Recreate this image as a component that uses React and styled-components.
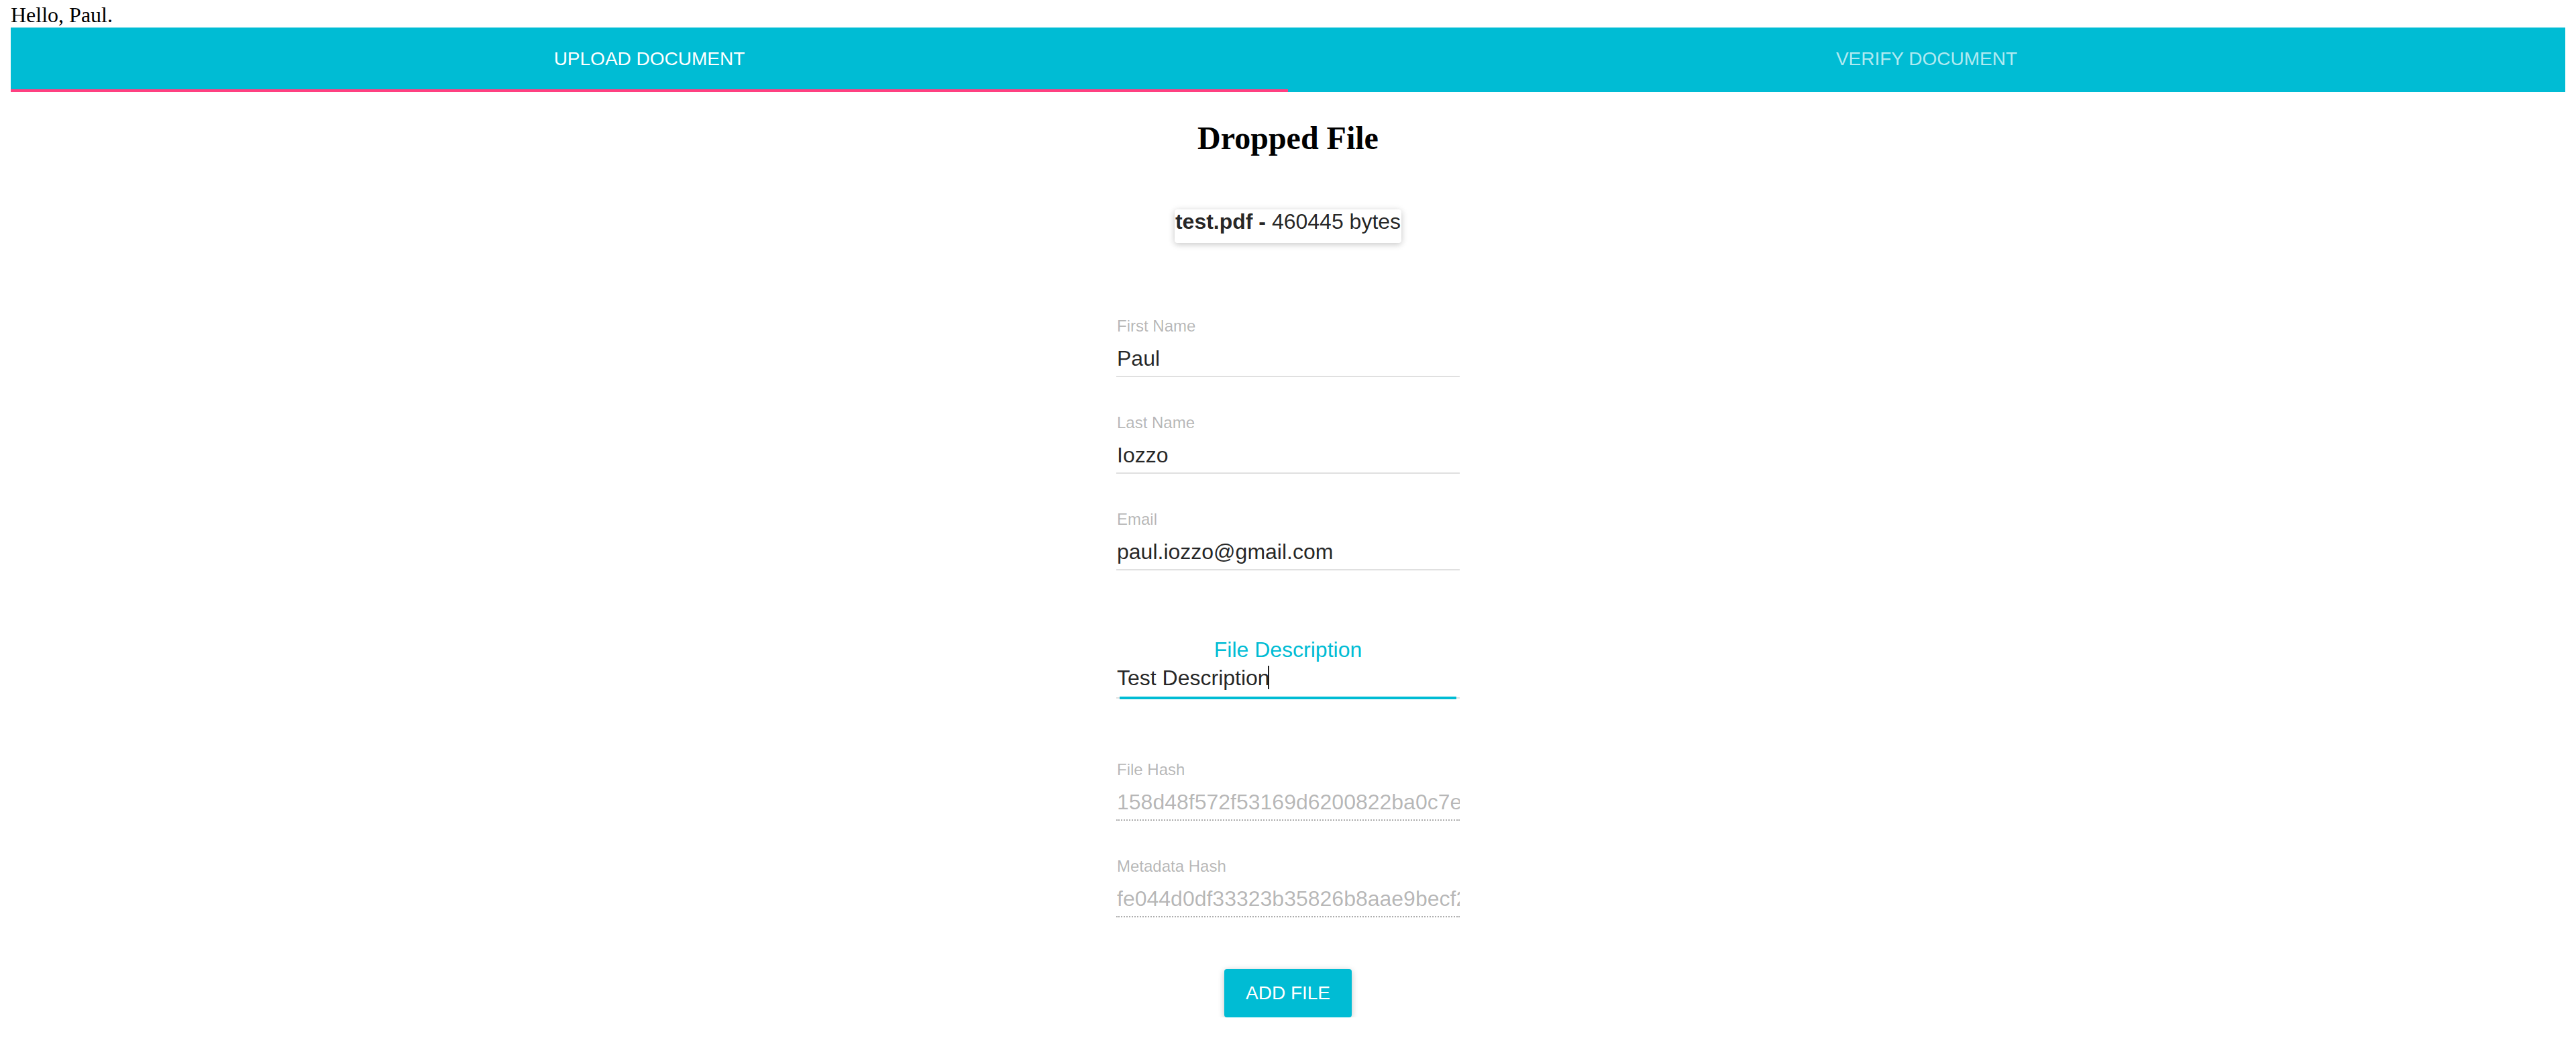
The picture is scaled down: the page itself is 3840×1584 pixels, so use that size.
import React from "react";
import styled, { createGlobalStyle } from "styled-components";

const CYAN = "#00bcd4";
const PINK = "#ff4081";

const GlobalStyle = createGlobalStyle`
  html, body { background: #ffffff; }
  body {
    margin: 4px 16px 16px;
    font-family: "Liberation Serif", "Times New Roman", serif;
    color: #000;
  }
`;

const Greeting = styled.div`
  font-family: "Liberation Serif", "Times New Roman", serif;
  font-size: 32px;
  line-height: 37px;
  height: 37px;
`;

const TabBar = styled.nav`
  display: grid;
  grid-template-columns: 1fr 1fr;
  height: 96px;
  background: ${CYAN};
`;

const Tab = styled.div`
  display: flex;
  align-items: center;
  justify-content: center;
  height: 90px;
  padding-top: 2px;
  border-bottom: 4px solid ${(p) => (p.$active ? PINK : "transparent")};
  font-family: "Liberation Sans", Arial, sans-serif;
  font-size: 28px;
  text-transform: uppercase;
  color: ${(p) => (p.$active ? "#ffffff" : "rgba(255,255,255,0.7)")};
`;

const Main = styled.main`
  display: flex;
  flex-direction: column;
  align-items: center;
`;

const Title = styled.h2`
  margin: 41px 0 0;
  font-family: "Liberation Serif", "Times New Roman", serif;
  font-size: 48px;
  font-weight: bold;
  line-height: 55px;
`;

const FileChip = styled.div`
  margin-top: 79px;
  padding: 0 1px 13px;
  font-family: "Liberation Sans", Arial, sans-serif;
  font-size: 32px;
  line-height: 37px;
  color: rgba(0, 0, 0, 0.87);
  background: #fff;
  border-radius: 4px;
  box-shadow: 0 2px 12px rgba(0, 0, 0, 0.12), 0 2px 8px rgba(0, 0, 0, 0.12);
  white-space: nowrap;
`;

const Form = styled.form`
  margin-top: 72px;
  width: 512px;
  display: flex;
  flex-direction: column;
  font-family: "Liberation Sans", Arial, sans-serif;
`;

const Field = styled.div`
  height: 144px;
  display: flex;
  flex-direction: column;
`;

const Label = styled.label`
  margin-top: 34px;
  padding-left: 1px;
  font-size: 24px;
  line-height: 36px;
  color: rgba(0, 0, 0, 0.3);
`;

const Value = styled.div`
  margin-top: 6px;
  padding-left: 1px;
  font-size: 32px;
  line-height: 48px;
  height: 48px;
  white-space: nowrap;
  overflow: hidden;
  color: ${(p) => (p.$disabled ? "rgba(0,0,0,0.3)" : "rgba(0,0,0,0.87)")};
`;

const Underline = styled.div`
  margin-top: 2px;
  height: 0;
  border-bottom: 2px ${(p) => (p.$disabled ? "dotted rgba(0,0,0,0.32)" : "solid #e0e0e0")};
`;

const DescField = styled.div`
  display: flex;
  flex-direction: column;
  padding-top: 82px;
  padding-bottom: 54px;
`;

const DescLabel = styled.label`
  font-size: 32px;
  line-height: 40px;
  text-align: center;
  color: ${CYAN};
`;

const DescValue = styled.div`
  margin-top: 2px;
  padding-left: 1px;
  font-size: 32px;
  line-height: 40px;
  height: 40px;
  white-space: nowrap;
  color: rgba(0, 0, 0, 0.87);
`;

const Caret = styled.span`
  display: inline-block;
  vertical-align: top;
  width: 2px;
  height: 35px;
  margin-top: 2px;
  margin-left: -3px;
  background: rgba(0, 0, 0, 0.87);
`;

const FocusUnderline = styled.div`
  position: relative;
  margin-top: 9px;
  height: 2px;
  background: #e0e0e0;
`;

const FocusLine = styled.div`
  position: absolute;
  top: -1px;
  left: 5px;
  right: 5px;
  height: 4px;
  background: ${CYAN};
`;

const AddButton = styled.button`
  margin-top: 61px;
  height: 72px;
  padding: 0 32px;
  border: none;
  border-radius: 4px;
  background: ${CYAN};
  color: #fff;
  font-family: "Liberation Sans", Arial, sans-serif;
  font-size: 28px;
  text-transform: uppercase;
  box-shadow: 0 2px 12px rgba(0, 0, 0, 0.12), 0 2px 8px rgba(0, 0, 0, 0.12);
  cursor: pointer;
`;

const fields = [
  { label: "First Name", value: "Paul" },
  { label: "Last Name", value: "Iozzo" },
  { label: "Email", value: "paul.iozzo@gmail.com" },
];

const hashes = [
  { label: "File Hash", value: "158d48f572f53169d6200822ba0c7e4f1a9b3c2d5e6f7081" },
  { label: "Metadata Hash", value: "fe044d0df33323b35826b8aae9becf2a71c0d4e59b8f6a13" },
];

export default function App() {
  return (
    <>
      <GlobalStyle />
      <Greeting>Hello, Paul.</Greeting>
      <TabBar>
        <Tab $active>Upload Document</Tab>
        <Tab>Verify Document</Tab>
      </TabBar>
      <Main>
        <Title>Dropped File</Title>
        <FileChip>
          <b>test.pdf - </b>460445 bytes
        </FileChip>
        <Form onSubmit={(e) => e.preventDefault()}>
          {fields.map((f) => (
            <Field key={f.label}>
              <Label>{f.label}</Label>
              <Value>{f.value}</Value>
              <Underline />
            </Field>
          ))}
          <DescField>
            <DescLabel>File Description</DescLabel>
            <DescValue>
              Test Description
              <Caret />
            </DescValue>
            <FocusUnderline>
              <FocusLine />
            </FocusUnderline>
          </DescField>
          {hashes.map((f) => (
            <Field key={f.label}>
              <Label>{f.label}</Label>
              <Value $disabled>{f.value}</Value>
              <Underline $disabled />
            </Field>
          ))}
        </Form>
        <AddButton type="button">Add File</AddButton>
      </Main>
    </>
  );
}
